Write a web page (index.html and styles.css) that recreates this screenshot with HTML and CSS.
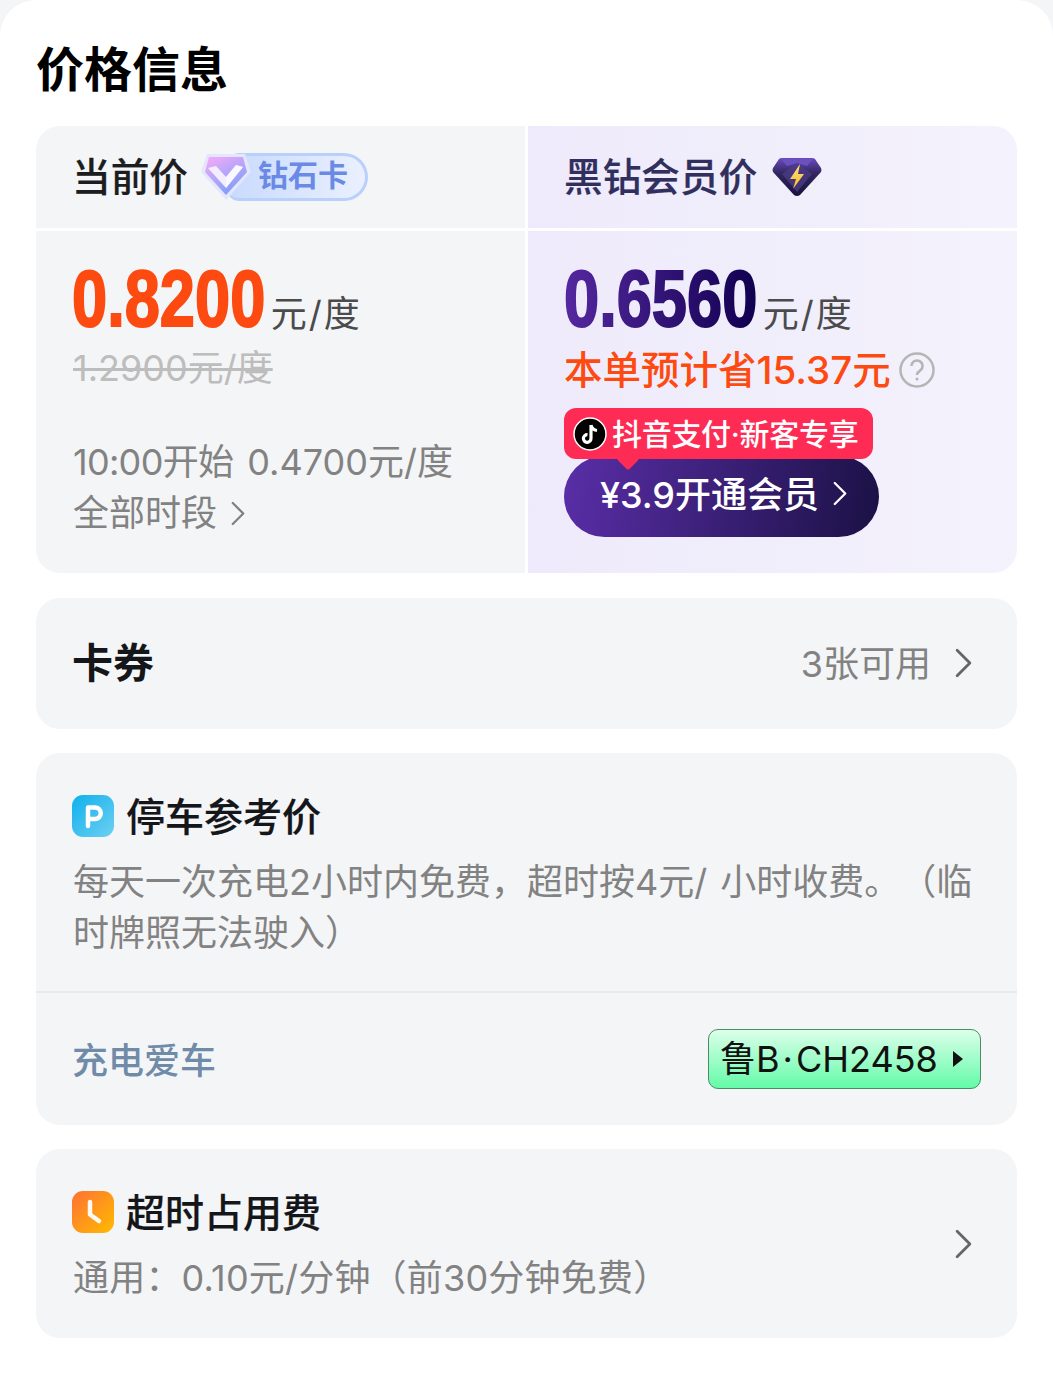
FILE: index.html
```html
<!DOCTYPE html>
<html lang="zh-CN">
<head>
    <meta charset="UTF-8">
    <title>价格信息</title>
    <meta name="viewport" content="width=device-width, initial-scale=1.0">
    <link rel="stylesheet" href="styles.css">
</head>
<body>
<main class="sheet">
    <h1 class="title">价格信息</h1>

    <section class="card price-table">
        <div class="cell head">
            <span class="head-text">当前价</span>
            <span class="diamond-badge">
                <svg class="diamond-gem" viewBox="0 0 50 48" width="52" height="48">
                    <defs>
                        <linearGradient id="gemA" x1="0.2" y1="0" x2="0.8" y2="1">
                            <stop offset="0" stop-color="#eeaaf8"/>
                            <stop offset="0.55" stop-color="#a9a4fa"/>
                            <stop offset="1" stop-color="#6f9cf8"/>
                        </linearGradient>
                    </defs>
                    <path d="M6 1H44L50 19 25 47 0 19Z" fill="#e4e6fd"/>
                    <path d="M8 4H42L46 19 25 42 4 19Z" fill="url(#gemA)"/>
                    <path d="M7 15L15 13 25 24 35 12 42 14 25 35Z" fill="#f3eefe"/>
                    <path d="M25 24L35 12 42 14 25 35Z" fill="#fff" opacity=".6"/>
                </svg>
                <span class="diamond-text">钻石卡</span>
            </span>
        </div>
        <div class="cell head black">
            <span class="head-text">黑钻会员价</span>
            <svg class="black-gem" viewBox="0 0 50 40" width="50" height="40">
                <defs>
                    <linearGradient id="gemB" x1="0" y1="0" x2="0" y2="1">
                        <stop offset="0" stop-color="#6a4bc0"/>
                        <stop offset="0.4" stop-color="#33265f"/>
                        <stop offset="1" stop-color="#171240"/>
                    </linearGradient>
                    <linearGradient id="boltB" x1="0" y1="0" x2="0" y2="1">
                        <stop offset="0" stop-color="#ffe27a"/>
                        <stop offset="1" stop-color="#f9b92c"/>
                    </linearGradient>
                </defs>
                <path d="M10 1H40Q42 1 43 2L49 11Q50 13 49 15L28 38Q25 40 22 38L1 15Q0 13 1 11L7 2Q8 1 10 1Z" fill="url(#gemB)"/>
                <path d="M9 2H41L35 9 25 6 15 9Z" fill="#6b51bd"/>
                <path d="M25 6L40 17 25 35 10 17Z" fill="#4c3d86" opacity=".75"/>
                <path d="M28 7L18 22H24L21 32 32 17H26Z" fill="url(#boltB)"/>
            </svg>
        </div>

        <div class="cell body">
            <div class="price-line">
                <span class="big-price orange">0.8200</span>
                <span class="unit">元/度</span>
            </div>
            <div class="old-price">1.2900元/度</div>
            <div class="next-price"><span class="next-time">10:00开始</span>0.4700元/度</div>
            <div class="all-times">全部时段
                <svg class="chevron" viewBox="0 0 16 28" width="14" height="25"><path d="M2 2L14 14 2 26"/></svg>
            </div>
        </div>
        <div class="cell body black">
            <div class="price-line">
                <span class="big-price purple">0.6560</span>
                <span class="unit">元/度</span>
            </div>
            <div class="saving">本单预计省15.37元
                <svg class="help" viewBox="0 0 36 36" width="36" height="36">
                    <circle cx="18" cy="18" r="16.5"/>
                    <path d="M12.5 14a5.5 5.5 0 1 1 8.5 4.6c-2 1.300-3 2.200-3 4.400"/>
                    <circle class="help-dot" cx="18" cy="27" r="1.500"/>
                </svg>
            </div>
            <div class="open-wrap">
                <div class="promo-tag">
                    <svg class="tiktok" viewBox="0 0 34 34" width="34" height="34">
                        <circle cx="17" cy="17" r="16" fill="#000" stroke="#fff" stroke-width="1.500"/>
                        <path d="M18 8V21.500A3.800 3.800 0 1 1 14.500 17.700M18 8C18.500 11 20.500 13 24 13.500" fill="none" stroke="#fff" stroke-width="3.200"/>
                    </svg>
                    <span class="promo-text">抖音支付·新客专享</span>
                </div>
                <button class="open-btn" type="button"><span class="open-text">¥3.9开通会员</span>
                    <svg class="chevron white" viewBox="0 0 16 28" width="14" height="25"><path d="M2 2L14 14 2 26"/></svg>
                </button>
            </div>
        </div>
    </section>

    <section class="card coupon">
        <h2 class="coupon-title">卡券</h2>
        <div class="coupon-right"><span class="coupon-count">3张可用</span>
            <svg class="chevron dark" viewBox="0 0 16 28" width="17" height="30"><path d="M2 2L14 14 2 26"/></svg>
        </div>
    </section>

    <section class="card parking">
        <div class="parking-top">
            <h2 class="sub-title">
                <svg class="app-icon" viewBox="0 0 42 42" width="42" height="42">
                    <defs>
                        <linearGradient id="blueP" x1="0" y1="0" x2="1" y2="1">
                            <stop offset="0" stop-color="#0fb0ec"/>
                            <stop offset="1" stop-color="#6ed0f2"/>
                        </linearGradient>
                    </defs>
                    <rect width="42" height="42" rx="11" fill="url(#blueP)"/>
                    <path d="M16 31V12.500H23a5.500 5.500 0 0 1 0 11.500H16" fill="none" stroke="#fff" stroke-width="4.500" stroke-linecap="round" stroke-linejoin="round"/>
                </svg>
                <span class="sub-text">停车参考价</span>
            </h2>
            <p class="desc">每天一次充电2小时内免费，超时按4元/ 小时收费。（临时牌照无法驶入）</p>
        </div>
        <div class="parking-bottom">
            <span class="car-link">充电爱车</span>
            <span class="plate"><span class="plate-text">鲁B<span class="plate-dot">·</span>CH2458</span><i class="plate-arrow"></i></span>
        </div>
    </section>

    <section class="card overtime">
        <div>
            <h2 class="sub-title">
                <svg class="app-icon" viewBox="0 0 42 42" width="42" height="42">
                    <defs>
                        <linearGradient id="orangeC" x1="0" y1="0" x2="1" y2="1">
                            <stop offset="0" stop-color="#ff7034"/>
                            <stop offset="1" stop-color="#ffbc00"/>
                        </linearGradient>
                    </defs>
                    <rect width="42" height="42" rx="11" fill="url(#orangeC)"/>
                    <path d="M18 11V23.500L27 30" fill="none" stroke="#fff" stroke-width="4.500" stroke-linecap="round" stroke-linejoin="round" opacity=".95"/>
                </svg>
                <span class="sub-text">超时占用费</span>
            </h2>
            <p class="desc one-line">通用：0.10元/分钟（前30分钟免费）</p>
        </div>
        <svg class="chevron dark" viewBox="0 0 16 28" width="17" height="30"><path d="M2 2L14 14 2 26"/></svg>
    </section>
</main>
</body>
</html>
```

FILE: styles.css
```css
* {
    box-sizing: border-box;
}

html, body {
    margin: 0;
    padding: 0;
}

body {
    width: 1053px;
    height: 1374px;
    overflow: hidden;
    background-color: #f4f5f7;
    font-family: Inter, "Noto Sans CJK SC", sans-serif;
    text-spacing-trim: space-all;
}

.sheet {
    height: 1374px;
    padding: 35px 36px 0;
    background-color: white;
    border-radius: 36px 36px 0 0;
}

.title {
    margin: 0 0 22px;
    font-size: 48px;
    line-height: 69px;
    font-weight: 700;
    color: #000;
}

.card {
    background-color: #f4f5f7;
    border-radius: 24px;
    margin-bottom: 24px;
}

/* price table */
.price-table {
    display: grid;
    grid-template-columns: 489px 489px;
    grid-template-rows: 102px 342px;
    gap: 3px;
    overflow: hidden;
    background-color: white;
    height: 447px;
    margin-bottom: 25px;
}

.cell {
    background-color: #f4f5f7;
}

.cell.black {
    background: linear-gradient(90deg, #eeeafb, #f4f2fc);
}

.head {
    display: flex;
    align-items: center;
    padding-left: 36px;
}

.head-text {
    font-size: 38.700px;
    line-height: 50px;
    font-weight: 500;
    color: #1c1d20;
    -webkit-text-stroke: 0.2px currentColor;
}

.head.black .head-text {
    color: #312f5e;
}

.diamond-badge {
    position: relative;
    display: flex;
    align-items: center;
    width: 141px;
    height: 48px;
    margin-left: 39px;
    padding: 0 0 5px 31px;
    border: 3px solid #b9d0fd;
    border-left: none;
    border-radius: 12px 24px 24px 12px;
    background: linear-gradient(90deg, #c8dafd, #eaf0fe);
}

.diamond-gem {
    position: absolute;
    left: -27px;
    top: -3px;
}

.diamond-text {
    font-size: 30px;
    line-height: 40px;
    font-weight: 700;
    color: #6a8ae6;
}

.black-gem {
    margin-left: 15px;
}

.body {
    padding: 24px 0 0 36px;
}

.price-line {
    display: flex;
    align-items: flex-end;
    height: 87px;
}

.big-price {
    display: inline-block;
    margin-right: -52px;
    font-family: "Liberation Sans", sans-serif;
    font-size: 80px;
    line-height: 87px;
    font-weight: 700;
    transform: scaleX(.79);
    transform-origin: left;
    -webkit-text-stroke: 2px currentColor;
    white-space: nowrap;
}

.orange {
    color: #fd4a10;
}

.purple {
    background: linear-gradient(90deg, #55289f, #10004f);
    -webkit-background-clip: text;
    background-clip: text;
    color: transparent;
    -webkit-text-stroke: 2px transparent;
}

.unit {
    margin-left: 6px;
    padding-bottom: 3px;
    font-size: 36px;
    line-height: 50px;
    letter-spacing: 2px;
    color: #4b4b4b;
}

.old-price {
    margin: 0 0 0 1px;
    padding-top: 1px;
    font-size: 36px;
    line-height: 50px;
    color: #bdbdbd;
    text-decoration: line-through;
}

.next-price {
    margin: 44px 0 0 1px;
    font-size: 36px;
    line-height: 50px;
    color: #828282;
}

.next-time {
    margin-right: 14px;
    letter-spacing: -0.7px;
}

.all-times {
    display: flex;
    align-items: center;
    gap: 14px;
    margin-left: 1px;
    font-size: 36px;
    line-height: 52px;
    color: #828282;
}

.chevron {
    flex: none;
}

.chevron path {
    fill: none;
    stroke: #808080;
    stroke-width: 2.600;
    stroke-linecap: round;
    stroke-linejoin: round;
}

.chevron.white path {
    stroke: white;
}

.chevron.dark path {
    stroke: #666;
}

.saving {
    display: flex;
    align-items: center;
    gap: 8px;
    height: 50px;
    margin-top: 3px;
    font-size: 38.500px;
    line-height: 50px;
    font-weight: 500;
    color: #fd4a10;
}

.help circle {
    fill: none;
    stroke: #b5b5b5;
    stroke-width: 2.500;
}

.help path {
    fill: none;
    stroke: #b5b5b5;
    stroke-width: 2.500;
}

.help .help-dot {
    fill: #b5b5b5;
    stroke: none;
}

.open-wrap {
    position: relative;
    width: 315px;
    margin-top: 13px;
    padding-top: 48px;
}

.promo-tag {
    position: absolute;
    z-index: 1;
    top: 0;
    left: 0;
    display: flex;
    align-items: center;
    gap: 5px;
    width: 309px;
    height: 51px;
    padding-left: 9px;
    border-radius: 12px;
    background-color: #fe2c55;
    color: white;
    font-size: 30px;
    font-weight: 500;
    letter-spacing: -0.3px;
    white-space: nowrap;
}

.promo-text {
    padding-bottom: 4px;
}

.promo-tag::after {
    content: "";
    position: absolute;
    left: 56px;
    bottom: -8px;
    width: 16px;
    height: 16px;
    background-color: #fe2c55;
    transform: rotate(45deg);
    border-radius: 2px;
}

.open-btn {
    display: flex;
    align-items: center;
    justify-content: center;
    gap: 14px;
    width: 315px;
    height: 81px;
    padding: 0 0 0 4px;
    border: none;
    border-radius: 41px;
    background: linear-gradient(100deg, #5a2ea8, #1b1145);
    color: white;
    font-family: inherit;
    font-size: 36px;
    font-weight: 500;
}

.open-text {
    margin-top: -10px;
}

.open-btn .chevron {
    margin-top: -6px;
}

/* coupon row */
.coupon {
    display: flex;
    align-items: center;
    justify-content: space-between;
    height: 131px;
    padding: 0 45px 0 36px;
}

.coupon-title {
    margin: 0;
    padding-bottom: 8px;
    font-size: 41px;
    font-weight: 700;
    color: #15161a;
}

.coupon-right {
    display: flex;
    align-items: center;
    gap: 24px;
    font-size: 36px;
    color: #828282;
}

.coupon-count {
    margin-top: -6px;
}

.coupon-right .chevron {
    margin-top: -2px;
}

/* parking */
.parking {
    height: 372px;
}

.parking-top {
    height: 240px;
    padding: 35px 36px 0;
    border-bottom: 2px solid #e8e9ec;
}

.sub-title {
    display: flex;
    align-items: center;
    gap: 12px;
    height: 56px;
    margin: 0;
    font-size: 39px;
    line-height: 56px;
    font-weight: 500;
    color: #15161a;
}

.sub-text {
    margin-top: 2px;
    -webkit-text-stroke: 0.2px currentColor;
}

.app-icon {
    flex: none;
}

.desc {
    margin: 13px 0 0 1px;
    font-size: 36px;
    line-height: 51px;
    word-spacing: 3px;
    color: #828282;
}

.parking-bottom {
    display: flex;
    align-items: center;
    justify-content: space-between;
    height: 132px;
    padding: 0 36px 0 36px;
}

.car-link {
    padding-bottom: 2px;
    font-size: 36px;
    font-weight: 500;
    color: #6f8ba8;
}

.plate {
    display: flex;
    align-items: center;
    width: 273px;
    height: 60px;
    padding-left: 11px;
    border: 1.500px solid #4d8a68;
    border-radius: 10px;
    background: linear-gradient(180deg, #dcffea, #63fba8);
    font-size: 36px;
    color: #111;
}

.plate-text {
    padding-bottom: 7px;
}

.plate-dot {
    margin: 0 3px;
}

.plate-arrow {
    width: 0;
    height: 0;
    margin-left: 15px;
    border-left: 10px solid #111;
    border-top: 8px solid transparent;
    border-bottom: 8px solid transparent;
}

/* overtime */
.overtime {
    display: flex;
    align-items: center;
    justify-content: space-between;
    height: 189px;
    padding: 0 45px 0 36px;
}

.one-line {
    margin-top: 13px;
    letter-spacing: 0.2px;
}
```
